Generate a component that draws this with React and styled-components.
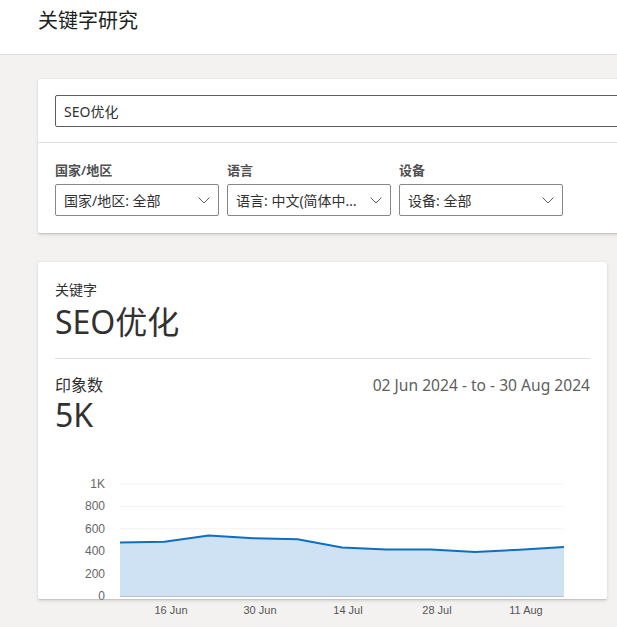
import React from "react";
import styled, { createGlobalStyle } from "styled-components";

const GlobalStyle = createGlobalStyle`
  html, body {
    margin: 0;
    padding: 0;
    background: #f3f2f1;
    overflow: hidden;
  }
  body {
    font-family: "Segoe UI", "Noto Sans", "Noto Sans CJK SC", sans-serif;
    color: #323130;
  }
`;

const Page = styled.div`
  width: 617px;
  height: 627px;
  overflow: hidden;
`;

const Header = styled.header`
  height: 55px;
  background: #fff;
  border-bottom: 1px solid #e1dfdd;
  padding: 7px 38px 0;
  box-sizing: border-box;
`;

const PageTitle = styled.h1`
  margin: 0;
  font-size: 20px;
  line-height: 28px;
  font-weight: 400;
  color: #201f1e;
`;

const Main = styled.main`
  display: flex;
  flex-direction: column;
  align-items: flex-start;
  gap: 29px;
  padding: 24px 0 0 38px;
`;

const Card = styled.section`
  background: #fff;
  border-radius: 2px;
  box-shadow: 0 1.6px 3.6px rgba(0, 0, 0, 0.12), 0 0.3px 0.9px rgba(0, 0, 0, 0.1);
  width: ${(p) => p.$width}px;
  height: ${(p) => (p.$height ? `${p.$height}px` : "auto")};
  box-sizing: border-box;
  flex-shrink: 0;
`;

const SearchRow = styled.div`
  padding: 16px 17px 15px;
  border-bottom: 1px solid #e1dfdd;
`;

const SearchInput = styled.div`
  height: 32px;
  box-sizing: border-box;
  border: 1px solid #605e5c;
  border-radius: 2px;
  padding: 0 8px;
  display: flex;
  align-items: center;
  font-size: 14px;
  color: #323130;
`;

const Filters = styled.div`
  display: flex;
  gap: 8px;
  padding: 19px 17px 17px;
`;

const Filter = styled.div`
  display: flex;
  flex-direction: column;
  gap: 6px;
  width: 164px;
`;

const FilterLabel = styled.label`
  font-size: 13px;
  line-height: 16px;
  font-weight: 600;
  color: #505050;
`;

const Select = styled.div`
  height: 32px;
  box-sizing: border-box;
  border: 1px solid #8a8886;
  border-radius: 2px;
  display: flex;
  align-items: center;
  padding: 0 8px;
  gap: 8px;
  font-size: 14px;
  color: #323130;
`;

const SelectText = styled.span`
  flex: 1;
  min-width: 0;
  white-space: nowrap;
  overflow: hidden;
  text-overflow: ellipsis;
`;

const Chevron = () => (
  <svg width="12" height="7" viewBox="0 0 12 7">
    <path d="M0.5 0.5 L6 6 L11.5 0.5" fill="none" stroke="#605e5c" strokeWidth="1" />
  </svg>
);

const StatsCard = styled(Card)`
  padding: 18px 17px 0;
`;

const KwLabel = styled.div`
  font-size: 14px;
  line-height: 20px;
  color: #323130;
`;

const KwValue = styled.div`
  font-size: 32px;
  line-height: 40px;
  margin-top: 2px;
  color: #323130;
`;

const Divider = styled.hr`
  margin: 16px 0 0;
  border: none;
  border-top: 1px solid #e1dfdd;
`;

const MetricRow = styled.div`
  display: flex;
  justify-content: space-between;
  align-items: center;
  margin-top: 16px;
  line-height: 20px;
`;

const MetricLabel = styled.span`
  font-size: 16px;
  color: #323130;
`;

const DateRange = styled.span`
  font-size: 15.6px;
  color: #605e5c;
`;

const MetricValue = styled.div`
  font-size: 32px;
  line-height: 40px;
  color: #323130;
`;

const ChartSvg = styled.svg`
  display: block;
  overflow: visible;
`;

const values = [479, 485, 539, 515, 506, 434, 416, 416, 392, 413, 437];
const X0 = 65;
const X1 = 509;
const Y0 = 161;
const Y1 = 49;
const yOf = (v) => Y0 - ((Y0 - Y1) * v) / 1000;
const xOf = (i) => X0 + ((X1 - X0) * i) / (values.length - 1);

const yTicks = [
  { v: 1000, t: "1K" },
  { v: 800, t: "800" },
  { v: 600, t: "600" },
  { v: 400, t: "400" },
  { v: 200, t: "200" },
  { v: 0, t: "0" },
];

const xTicks = [
  { x: 116, t: "16 Jun" },
  { x: 205, t: "30 Jun" },
  { x: 293, t: "14 Jul" },
  { x: 382, t: "28 Jul" },
  { x: 471, t: "11 Aug" },
];

const Chart = () => {
  const pts = values.map((v, i) => `${xOf(i).toFixed(1)},${yOf(v).toFixed(1)}`);
  const line = `M${pts.join(" L")}`;
  const area = `${line} L${X1},${Y0} L${X0},${Y0} Z`;
  return (
    <ChartSvg width="535" height="190" viewBox="0 0 535 190">
      {yTicks.map((tk) => (
        <g key={tk.t}>
          {tk.v > 0 && (
            <line x1={X0} x2={X1} y1={yOf(tk.v)} y2={yOf(tk.v)} stroke="#f3f2f1" strokeWidth="1" />
          )}
          <text
            x="50"
            y={yOf(tk.v) + 4}
            textAnchor="end"
            fontSize="12"
            fill="#666"
            fontFamily="'Liberation Sans', Arial, sans-serif"
          >
            {tk.t}
          </text>
        </g>
      ))}
      <path d={area} fill="#cfe2f4" />
      <path d={line} fill="none" stroke="#106ebe" strokeWidth="2" strokeLinejoin="round" />
      <line x1={X0} x2={X1} y1={Y0 + 0.5} y2={Y0 + 0.5} stroke="#b8c2cc" strokeWidth="1" />
      {xTicks.map((tk) => (
        <text
          key={tk.t}
          x={tk.x}
          y="179"
          textAnchor="middle"
          fontSize="11"
          fill="#555"
          fontFamily="'Liberation Sans', Arial, sans-serif"
        >
          {tk.t}
        </text>
      ))}
    </ChartSvg>
  );
};

const filters = [
  { label: "国家/地区", value: "国家/地区: 全部" },
  { label: "语言", value: "语言: 中文(简体中文)" },
  { label: "设备", value: "设备: 全部" },
];

export default function App() {
  return (
    <Page>
      <GlobalStyle />
      <Header>
        <PageTitle>关键字研究</PageTitle>
      </Header>
      <Main>
        <Card $width={660}>
          <SearchRow>
            <SearchInput>SEO优化</SearchInput>
          </SearchRow>
          <Filters>
            {filters.map((f) => (
              <Filter key={f.label}>
                <FilterLabel>{f.label}</FilterLabel>
                <Select>
                  <SelectText>{f.value}</SelectText>
                  <Chevron />
                </Select>
              </Filter>
            ))}
          </Filters>
        </Card>
        <StatsCard $width={569} $height={337}>
          <KwLabel>关键字</KwLabel>
          <KwValue>SEO优化</KwValue>
          <Divider />
          <MetricRow>
            <MetricLabel>印象数</MetricLabel>
            <DateRange>02 Jun 2024 - to - 30 Aug 2024</DateRange>
          </MetricRow>
          <MetricValue>5K</MetricValue>
          <Chart />
        </StatsCard>
      </Main>
    </Page>
  );
}
